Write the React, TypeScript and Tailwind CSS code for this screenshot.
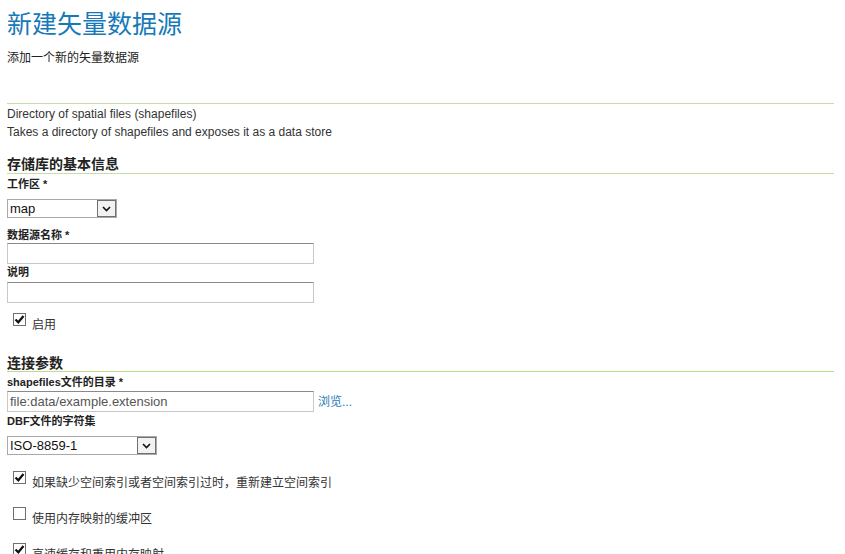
import React from "react";

const F = "font-['Liberation_Sans','Noto_Sans_CJK_SC',sans-serif]";

function Check({ checked }: { checked: boolean }) {
  return (
    <span className="flex h-[13px] w-[13px] shrink-0 items-center justify-center border border-[#6f6f6f] bg-white">
      {checked && (
        <svg width="11" height="11" viewBox="0 0 11 11">
          <path d="M1.5 5.5 L4.3 8.3 L9.5 2" fill="none" stroke="#111" strokeWidth="2.2" />
        </svg>
      )}
    </span>
  );
}

function Select({ value, width }: { value: string; width: string }) {
  return (
    <div className={`flex h-[19px] items-stretch border border-[#a9a9a9] bg-white ${width}`}>
      <span className="flex-1 pl-[2px] text-[13px] leading-[17px] text-[#111]">{value}</span>
      <span className="flex w-[19px] items-center justify-center border border-[#707070] bg-[#f2f2f2]">
        <svg width="9" height="6" viewBox="0 0 9 6">
          <path d="M1 1 L4.5 4.5 L8 1" fill="none" stroke="#111" strokeWidth="1.6" />
        </svg>
      </span>
    </div>
  );
}

function TextInput({ value }: { value?: string }) {
  return (
    <div className="h-[21px] w-[307px] border border-[#c8c8c8] border-t-[#8a8a8a] bg-white pl-[2px] text-[13px] leading-[19px] text-[#555]">
      {value}
    </div>
  );
}

function CheckRow({ checked, label, mt }: { checked: boolean; label: string; mt: string }) {
  return (
    <div className={`flex items-start gap-[6px] pl-[6px] ${mt}`}>
      <span className="mt-[1px]">
        <Check checked={checked} />
      </span>
      <span className="text-[12px] leading-[16px] pt-[5px] text-[#333]">{label}</span>
    </div>
  );
}

export default function App() {
  return (
    <div className={`${F} h-[554px] w-[845px] overflow-hidden bg-white pl-[7px] pr-[11px] text-[#333]`}>
      <h1 className="mt-[9px] text-[25px] leading-[30px] font-normal text-[#1679b8]">新建矢量数据源</h1>
      <p className="mt-[11px] text-[12px] leading-[16px] text-[#222]">添加一个新的矢量数据源</p>
      <div className="mt-[37px] h-px bg-[#c8dca6]" />
      <p className="mt-[1px] text-[12px] leading-[18px]">Directory of spatial files (shapefiles)</p>
      <p className="text-[12px] leading-[18px]">Takes a directory of shapefiles and exposes it as a data store</p>

      <h2 className="mt-[14px] border-b border-[#c8dca6] text-[14px] leading-[18px] font-bold text-[#222]">存储库的基本信息</h2>
      <label className="mt-[2px] block text-[11px] leading-[16px] font-bold text-[#222]">工作区 *</label>
      <div className="mt-[7px]">
        <Select value="map" width="w-[110px]" />
      </div>
      <label className="mt-[9px] block text-[11px] leading-[16px] font-bold text-[#222]">数据源名称 *</label>
      <TextInput />
      <label className="block text-[11px] leading-[16px] font-bold text-[#222]">说明</label>
      <div className="mt-[2px]">
        <TextInput />
      </div>
      <CheckRow checked label="启用" mt="mt-[9px]" />

      <h2 className="mt-[22px] border-b border-[#bcdc8a] text-[14px] leading-[16px] font-bold text-[#222]">连接参数</h2>
      <label className="mt-[2px] block text-[11px] leading-[16px] font-bold text-[#222]">shapefiles文件的目录 *</label>
      <div className="mt-[1px] flex items-center gap-[4px]">
        <TextInput value="file:data/example.extension" />
        <a className="text-[12px] text-[#2a7ab8]">浏览...</a>
      </div>
      <label className="mt-[1px] block text-[11px] leading-[16px] font-bold text-[#222]">DBF文件的字符集</label>
      <div className="mt-[7px]">
        <Select value="ISO-8859-1" width="w-[150px]" />
      </div>
      <CheckRow checked label="如果缺少空间索引或者空间索引过时，重新建立空间索引" mt="mt-[15px]" />
      <CheckRow checked={false} label="使用内存映射的缓冲区" mt="mt-[15px]" />
      <CheckRow checked label="高速缓存和重用内存映射" mt="mt-[15px]" />
    </div>
  );
}
